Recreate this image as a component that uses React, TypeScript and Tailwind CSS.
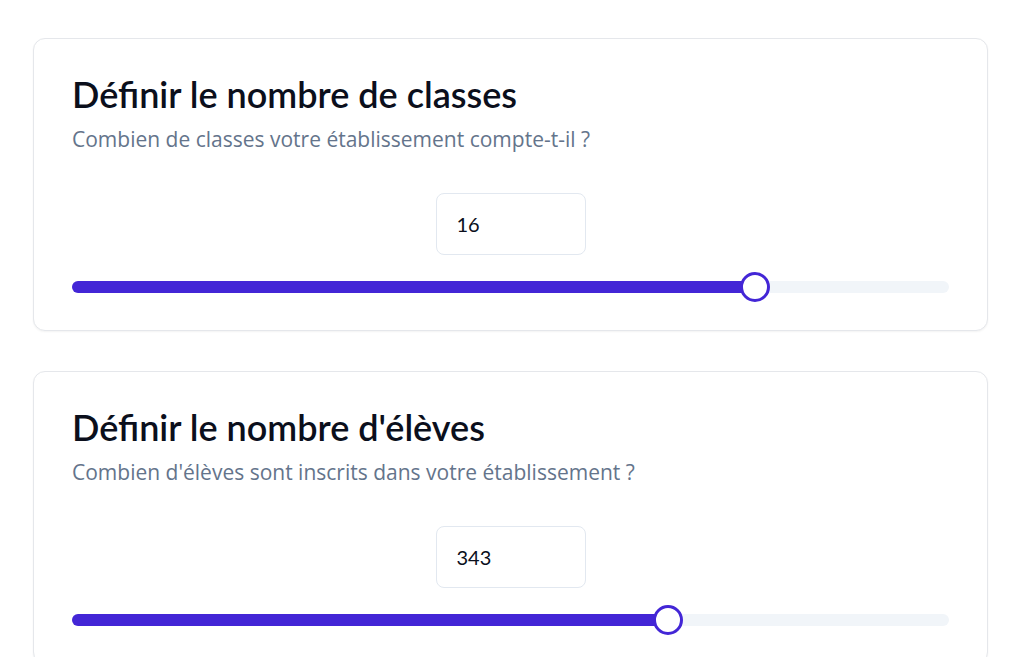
import { useState } from 'react';

type Field = {
	title: string;
	subtitle: string;
	value: number;
	min: number;
	max: number;
};

const fields: Field[] = [
	{
		title: 'Définir le nombre de classes',
		subtitle: 'Combien de classes votre établissement compte-t-il ?',
		value: 16,
		min: 0,
		max: 20.54,
	},
	{
		title: "Définir le nombre d'élèves",
		subtitle: "Combien d'élèves sont inscrits dans votre établissement ?",
		value: 343,
		min: 0,
		max: 504.7,
	},
];

function CountCard({ field }: { field: Field }) {
	const [value, setValue] = useState<number>(field.value);
	const pct = ((value - field.min) / (field.max - field.min)) * 100;

	return (
		<div className="rounded-xl border border-[#e5e7eb] bg-white shadow-[0_1px_2px_rgba(0,0,0,0.05)] px-[38px] pt-[35px] pb-[31px]">
			<h2 className="text-[36px] leading-[40px] font-semibold text-[#0b0f1c]">
				{field.title}
			</h2>
			<p className="mt-[11px] text-[21px] leading-[28px] text-[#64748b] font-['Open_Sans',sans-serif]">
				{field.subtitle}
			</p>
			<div className="mt-[40px] flex justify-center">
				<input
					type="text"
					value={value}
					onChange={(e) => setValue(Number(e.target.value) || 0)}
					className="w-[150px] h-[62px] rounded-lg border border-[#e2e8f0] px-5 text-[20px] text-[#0b0f1c] outline-none"
				/>
			</div>
			<div className="mt-[20px] relative h-[24px] flex items-center">
				<div className="w-full h-[12px] rounded-full bg-[#f1f5f9] overflow-hidden">
					<div className="h-full bg-[#4326d6]" style={{ width: `${pct}%` }} />
				</div>
				<div
					className="absolute top-1/2 w-[30px] h-[30px] -translate-x-1/2 -translate-y-1/2 rounded-full bg-white border-[3px] border-[#4326d6]"
					style={{ left: `${pct}%` }}
				/>
			</div>
		</div>
	);
}

export default function App() {
	return (
		<div
			className="min-h-screen bg-white pl-[33px] pr-[36px] pt-[38px] pb-10 flex flex-col gap-[40px]"
			style={{ fontFamily: '"Lato", "Noto Sans", sans-serif' }}>
			{fields.map((f) => (
				<CountCard key={f.title} field={f} />
			))}
		</div>
	);
}
